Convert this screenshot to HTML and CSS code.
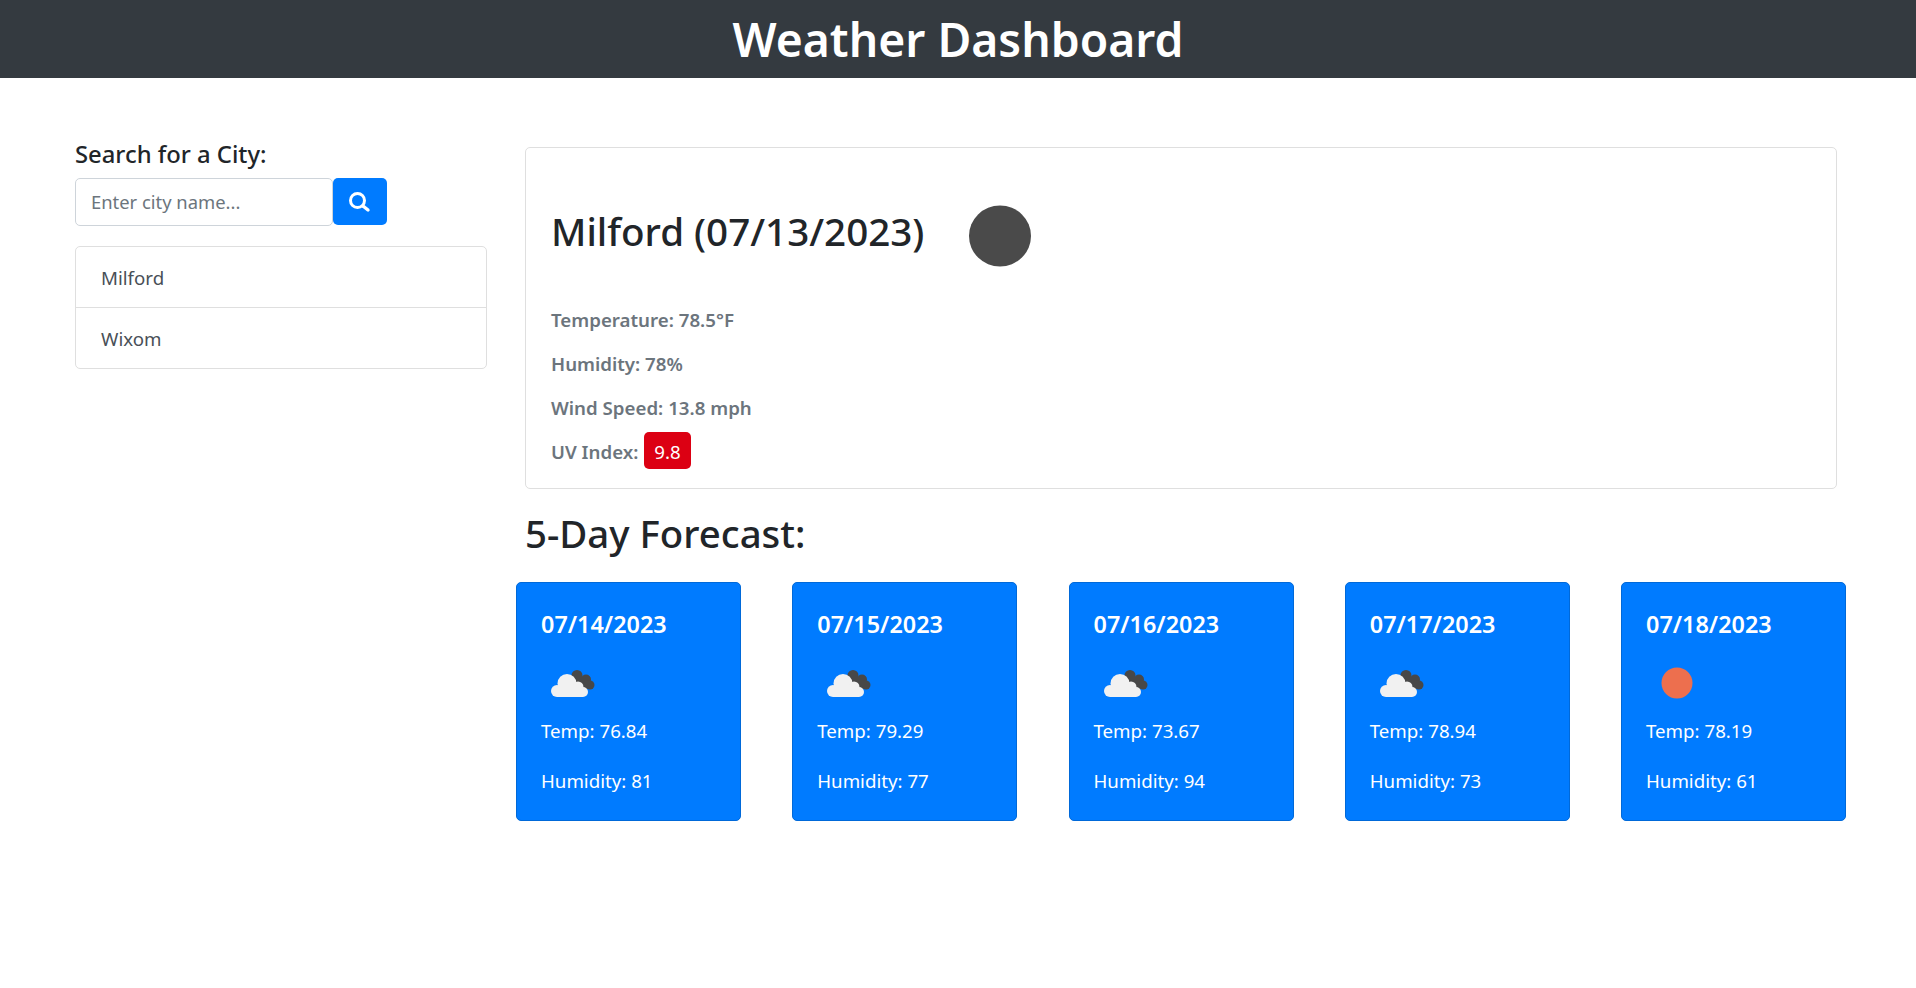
FILE: index.html
```html
<!DOCTYPE html>
<html lang="en">
<head>
<meta charset="UTF-8" />
<meta name="viewport" content="width=device-width, initial-scale=1" />
<title>Weather Dashboard</title>
<link rel="stylesheet" href="styles.css">
</head>
<body>
  <header class="topbar">
    <h1>Weather Dashboard</h1>
  </header>

  <div class="page">
    <aside class="sidebar">
      <label class="search-label" for="city">Search for a City:</label>
      <form class="search-form">
        <input type="text" id="city" placeholder="Enter city name..." />
        <button type="button" class="search-btn" aria-label="Search">
          <svg viewBox="0 0 24 24" width="24" height="24">
            <circle cx="9.5" cy="10.5" r="7" fill="none" stroke="#fff" stroke-width="3" />
            <path d="M15 16l5 4" fill="none" stroke="#fff" stroke-width="3.4" stroke-linecap="round" />
          </svg>
        </button>
      </form>
      <ul class="history">
        <li>Milford</li>
        <li>Wixom</li>
      </ul>
    </aside>

    <main class="content">
      <section class="current">
        <div class="current-head">
          <h2>Milford (07/13/2023)</h2>
          <svg class="current-icon" viewBox="0 0 62 62" width="62" height="62">
            <ellipse cx="31" cy="31" rx="31" ry="30.5" fill="#4a4a4a" />
          </svg>
        </div>
        <p>Temperature: 78.5°F</p>
        <p>Humidity: 78%</p>
        <p>Wind Speed: 13.8 mph</p>
        <p class="uv">UV Index: <span class="uv-badge">9.8</span></p>
      </section>

      <h3 class="forecast-title">5-Day Forecast:</h3>
      <div class="forecast">
        <div class="day">
          <h4>07/14/2023</h4>
          <svg class="day-icon" viewBox="0 0 62 62" width="62" height="62"><use href="#cloud" /></svg>
          <p>Temp: 76.84</p>
          <p>Humidity: 81</p>
        </div>
        <div class="day">
          <h4>07/15/2023</h4>
          <svg class="day-icon" viewBox="0 0 62 62" width="62" height="62"><use href="#cloud" /></svg>
          <p>Temp: 79.29</p>
          <p>Humidity: 77</p>
        </div>
        <div class="day">
          <h4>07/16/2023</h4>
          <svg class="day-icon" viewBox="0 0 62 62" width="62" height="62"><use href="#cloud" /></svg>
          <p>Temp: 73.67</p>
          <p>Humidity: 94</p>
        </div>
        <div class="day">
          <h4>07/17/2023</h4>
          <svg class="day-icon" viewBox="0 0 62 62" width="62" height="62"><use href="#cloud" /></svg>
          <p>Temp: 78.94</p>
          <p>Humidity: 73</p>
        </div>
        <div class="day">
          <h4>07/18/2023</h4>
          <svg class="day-icon" viewBox="0 0 62 62" width="62" height="62">
            <circle cx="31" cy="31" r="15.5" fill="#ed6f4e" />
          </svg>
          <p>Temp: 78.19</p>
          <p>Humidity: 61</p>
        </div>
      </div>
    </main>
  </div>

  <svg width="0" height="0" class="defs">
    <defs>
      <g id="cloud">
        <g fill="#484848">
          <circle cx="36" cy="23.5" r="5.5" />
          <circle cx="45" cy="27.5" r="5" />
          <circle cx="49" cy="33" r="4.5" />
          <rect x="32" y="25" width="14" height="12" />
        </g>
        <g fill="#f1f1f1">
          <circle cx="26" cy="31.5" r="9.5" />
          <circle cx="16" cy="39" r="6" />
          <circle cx="37" cy="35" r="5.5" />
          <circle cx="42" cy="40" r="5" />
          <rect x="16" y="36" width="26" height="9" />
        </g>
      </g>
    </defs>
  </svg>
</body>
</html>
```

FILE: styles.css
```css
* {
  box-sizing: border-box;
}
body {
  margin: 0;
  font-family: "Noto Sans", "Open Sans", sans-serif;
  font-size: 18.7px;
  line-height: 1.5;
  color: #212529;
  background: #fff;
}
.defs {
  position: absolute;
}
.topbar {
  background: #343a40;
  color: #fff;
  height: 78px;
  text-align: center;
}
.topbar h1 {
  margin: 0;
  padding-top: 1px;
  font-size: 46.3px;
  font-weight: 600;
  line-height: 78px;
}

.page {
  display: flex;
  padding: 60px 79px 0 75px;
}
.sidebar {
  width: 412px;
  margin-right: 38px;
  flex-shrink: 0;
}
.search-label {
  display: block;
  font-size: 23.8px;
  font-weight: 500;
  line-height: 32px;
  margin: 0 0 8px;
  color: #212529;
}
.search-form {
  display: flex;
  align-items: flex-start;
  margin-bottom: 20px;
}
.search-form input {
  width: 258px;
  height: 48px;
  padding: 5px 15px 6px;
  border: 1px solid #ced4da;
  border-radius: 5px;
  font-family: inherit;
  font-size: 18.4px;
  color: #495057;
}
.search-form input::placeholder {
  color: #6c757d;
}
.search-btn {
  width: 54px;
  height: 47px;
  display: flex;
  align-items: center;
  justify-content: center;
  padding: 0;
  border: none;
  border-radius: 5px;
  background: #007bff;
}
.history {
  list-style: none;
  margin: 0;
  padding: 0;
  border: 1px solid #dfdfdf;
  border-radius: 5px;
  color: #495057;
}
.history li {
  height: 60px;
  padding: 16px 25px;
  line-height: 30px;
}
.history li + li {
  height: 61px;
  border-top: 1px solid #dfdfdf;
}

.content {
  flex: 1;
  padding-top: 9px;
}
.current {
  height: 342px;
  padding: 0 25px;
  border: 1px solid #dfdfdf;
  border-radius: 5px;
  font-size: 18.7px;
  font-weight: 600;
  color: #6c757d;
}
.current-head {
  display: flex;
  align-items: center;
  height: 150px;
  padding-top: 17px;
}
.current-head h2 {
  margin: 0 45px 0 0;
  font-size: 38.6px;
  font-weight: 500;
  color: #212529;
}
.current-icon {
  margin-top: 8px;
}
.current p {
  margin: 0;
  height: 44px;
  line-height: 44px;
}
.uv-badge {
  display: inline-block;
  margin-left: 1px;
  padding: 0 10px;
  height: 37px;
  line-height: 39px;
  border-radius: 5px;
  background: #dc0013;
  color: #fff;
  font-weight: 400;
}

.forecast-title {
  margin: 0;
  padding-top: 17px;
  height: 93px;
  font-size: 38.4px;
  font-weight: 500;
  line-height: 54px;
}
.forecast {
  display: flex;
  justify-content: space-between;
  margin: 0 -9px;
}
.day {
  width: 225px;
  height: 239px;
  padding: 23px 24px;
  border: 1px solid #0069d9;
  border-radius: 5px;
  background: #007bff;
  color: #fff;
}
.day h4 {
  margin: 0;
  font-size: 23.4px;
  font-weight: 600;
  line-height: 36px;
}
.day-icon {
  display: block;
  margin: 10px 0 0;
}
.day p {
  margin: 0;
  height: 50px;
  padding-top: 1px;
  line-height: 32px;
}
```
